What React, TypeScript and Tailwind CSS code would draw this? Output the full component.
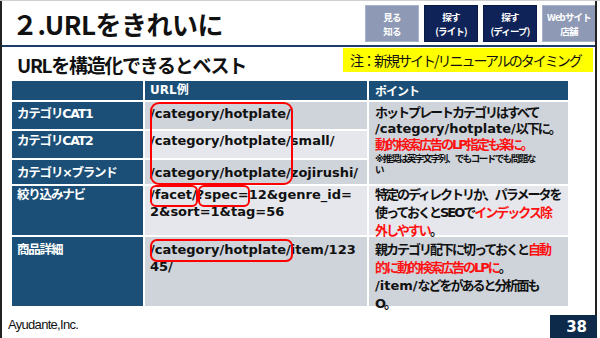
import React from 'react';

const JP = "font-['Noto_Sans_CJK_JP',sans-serif]";
const MIX = "font-['DejaVu_Sans','Noto_Sans_CJK_JP',sans-serif]";

type NavItem = { top: string; bottom: string; dark: boolean };

const navItems: NavItem[] = [
  { top: '見る', bottom: '知る', dark: false },
  { top: '探す', bottom: '(ライト)', dark: true },
  { top: '探す', bottom: '(ディープ)', dark: true },
  { top: 'Webサイト', bottom: '店舗', dark: false },
];

function NavButton({ item }: { item: NavItem }) {
  return (
    <div
      className={`flex h-[37px] w-[54px] flex-col items-center justify-center border text-[9.5px] font-bold text-white tracking-[-0.8px] whitespace-nowrap ${JP} ${
        item.dark ? 'border-[#0a1a44] bg-[#0f2358]' : 'border-[#a9b2c8] bg-[#8e99b5]'
      }`}
    >
      <div className="h-[14px] leading-[14px]">{item.top}</div>
      <div className="h-[14px] leading-[14px]">{item.bottom}</div>
    </div>
  );
}

function Label({ children, pt }: { children: React.ReactNode; pt: string }) {
  return (
    <div className={`bg-[#1b4f77] pl-[5px] text-[12.5px] font-bold leading-[17px] text-white tracking-[-1.2px] whitespace-nowrap ${MIX} ${pt}`}>
      {children}
    </div>
  );
}

function Url({ lines, pt, light }: { lines: string[]; pt: string; light?: boolean }) {
  return (
    <div
      className={`pl-[5px] text-[13px] font-bold leading-[17px] text-[#111] whitespace-nowrap font-['DejaVu_Sans',sans-serif] ${pt} ${
        light ? 'bg-[#e5e7ec]' : 'bg-[#cfd3da]'
      }`}
    >
      {lines.map((l) => (
        <div key={l}>{l}</div>
      ))}
    </div>
  );
}

const red = 'text-[#ff1010]';
const url = "tracking-normal font-['DejaVu_Sans',sans-serif]";

export default function App() {
  return (
    <div className="relative h-[338px] w-[600px] overflow-hidden border-t border-[#cfcfcf] bg-white">
      <div className="absolute left-0 top-0 h-[338px] w-[2px] bg-[#222]" />
      <div className="absolute left-[595px] top-0 h-[314px] w-[2px] bg-[#222]" />

      <div className="flex h-[44px] items-start justify-between">
        <div className={`pl-[12px] pt-[6px] text-[26px] font-bold leading-[34px] text-[#111] tracking-[-0.5px] ${JP}`}>
          ２.URLをきれいに
        </div>
        <div className="flex gap-[5px] pr-[4px] pt-[4px]">
          {navItems.map((n) => (
            <NavButton key={n.top + n.bottom} item={n} />
          ))}
        </div>
      </div>
      <div className="h-[2px] w-[597px] bg-[#1d3c68]" />

      <div className="flex h-[34px] items-start justify-between pr-[7px] pt-[1px]">
        <div className={`pl-[17px] pt-[5px] text-[19px] font-bold leading-[24px] text-[#111] tracking-[-1.3px] ${JP}`}>
          URLを構造化できるとベスト
        </div>
        <div className={`flex h-[24px] w-[250px] items-center bg-[#ffff00] pl-[7px] text-[14px] leading-[20px] text-[#111] tracking-[-2px] ${JP}`}>
          注：新規サイト/リニューアルのタイミング
        </div>
      </div>

      <div className="ml-[12px] grid w-[556px] grid-cols-[131px_222px_199px] grid-rows-[19px_27px_27px_24px_49px_69px] gap-[2px]">
        <div className="bg-[#1b4f77]" />
        <div className={`bg-[#1b4f77] pl-[5px] text-[12px] font-bold leading-[19px] text-white ${MIX}`}>URL例</div>
        <div className={`bg-[#1b4f77] pl-[6px] text-[12px] font-bold leading-[19px] text-white tracking-[-1px] ${JP}`}>ポイント</div>

        <Label pt="pt-[3px]">カテゴリCAT1</Label>
        <Url lines={['/category/hotplate/']} pt="pt-[3px]" />
        <div className={`row-span-3 bg-[#cfd3da] pl-[6px] pt-[3px] text-[13px] font-bold text-[#111] tracking-[-2px] whitespace-nowrap ${MIX}`}>
          <div className="leading-[16px]">ホットプレートカテゴリはすべて</div>
          <div className="leading-[16px]">
            <span className={url}>/category/hotplate/</span>以下に。
          </div>
          <div className={`leading-[16px] ${red}`}>動的検索広告のLP指定も楽に。</div>
          <div className="text-[9.5px] leading-[11px] tracking-[-1.5px]">※推奨は英字文字列、でもコードでも問題な</div>
          <div className="text-[9.5px] leading-[11px]">い</div>
        </div>

        <Label pt="pt-[1px]">カテゴリCAT2</Label>
        <Url lines={['/category/hotplate/small/']} pt="pt-[1px]" light />

        <Label pt="pt-[4px]">カテゴリ×ブランド</Label>
        <Url lines={['/category/hotplate/zojirushi/']} pt="pt-[4px]" />

        <Label pt="pt-0">絞り込みナビ</Label>
        <Url lines={['/facet/?spec=12&genre_id=', '2&sort=1&tag=56']} pt="pt-0" light />
        <div className={`bg-[#e5e7ec] pl-[6px] text-[13px] font-bold leading-[18px] text-[#111] tracking-[-2px] whitespace-nowrap ${MIX}`}>
          <div>特定のディレクトリか、パラメータを</div>
          <div>
            使っておくとSEOで<span className={red}>インデックス除</span>
          </div>
          <div>
            <span className={red}>外しやすい</span>。
          </div>
        </div>

        <Label pt="pt-[4px]">商品詳細</Label>
        <Url lines={['/category/hotplate/item/123', '45/']} pt="pt-[4px]" />
        <div className={`bg-[#cfd3da] pl-[6px] pt-[4px] text-[13px] font-bold leading-[18px] text-[#111] tracking-[-2px] whitespace-nowrap ${MIX}`}>
          <div>
            親カテゴリ配下に切っておくと<span className={red}>自動</span>
          </div>
          <div>
            <span className={red}>的に動的検索広告のLPに</span>。
          </div>
          <div>
            <span className={url}>/item/</span>などをがあると分析面も
          </div>
          <div>O。</div>
        </div>
      </div>

      <div className="mt-[9px] flex items-end justify-between">
        <div className="pb-[6px] pl-[8px] font-['Liberation_Sans',sans-serif] text-[13px] leading-[16px] text-[#111] tracking-[-0.7px]">
          Ayudante,Inc.
        </div>
        <div className="mr-[3px] flex h-[24px] w-[47px] items-center justify-end bg-[#0d2a4a] pr-[10px] font-['DejaVu_Sans',sans-serif] text-[15px] font-bold text-white">
          38
        </div>
      </div>

      {/* red highlight frames */}
      <div className="absolute left-[150px] top-[101px] h-[83px] w-[143px] rounded-[9px] border-2 border-[#ff0000]" />
      <div className="absolute left-[150px] top-[184px] h-[22px] w-[48px] rounded-[6px] border-2 border-[#ff0000]" />
      <div className="absolute left-[198px] top-[184px] h-[22px] w-[52px] rounded-[6px] border-2 border-[#ff0000]" />
      <div className="absolute left-[150px] top-[238px] h-[23px] w-[143px] rounded-[7px] border-2 border-[#ff0000]" />
    </div>
  );
}
